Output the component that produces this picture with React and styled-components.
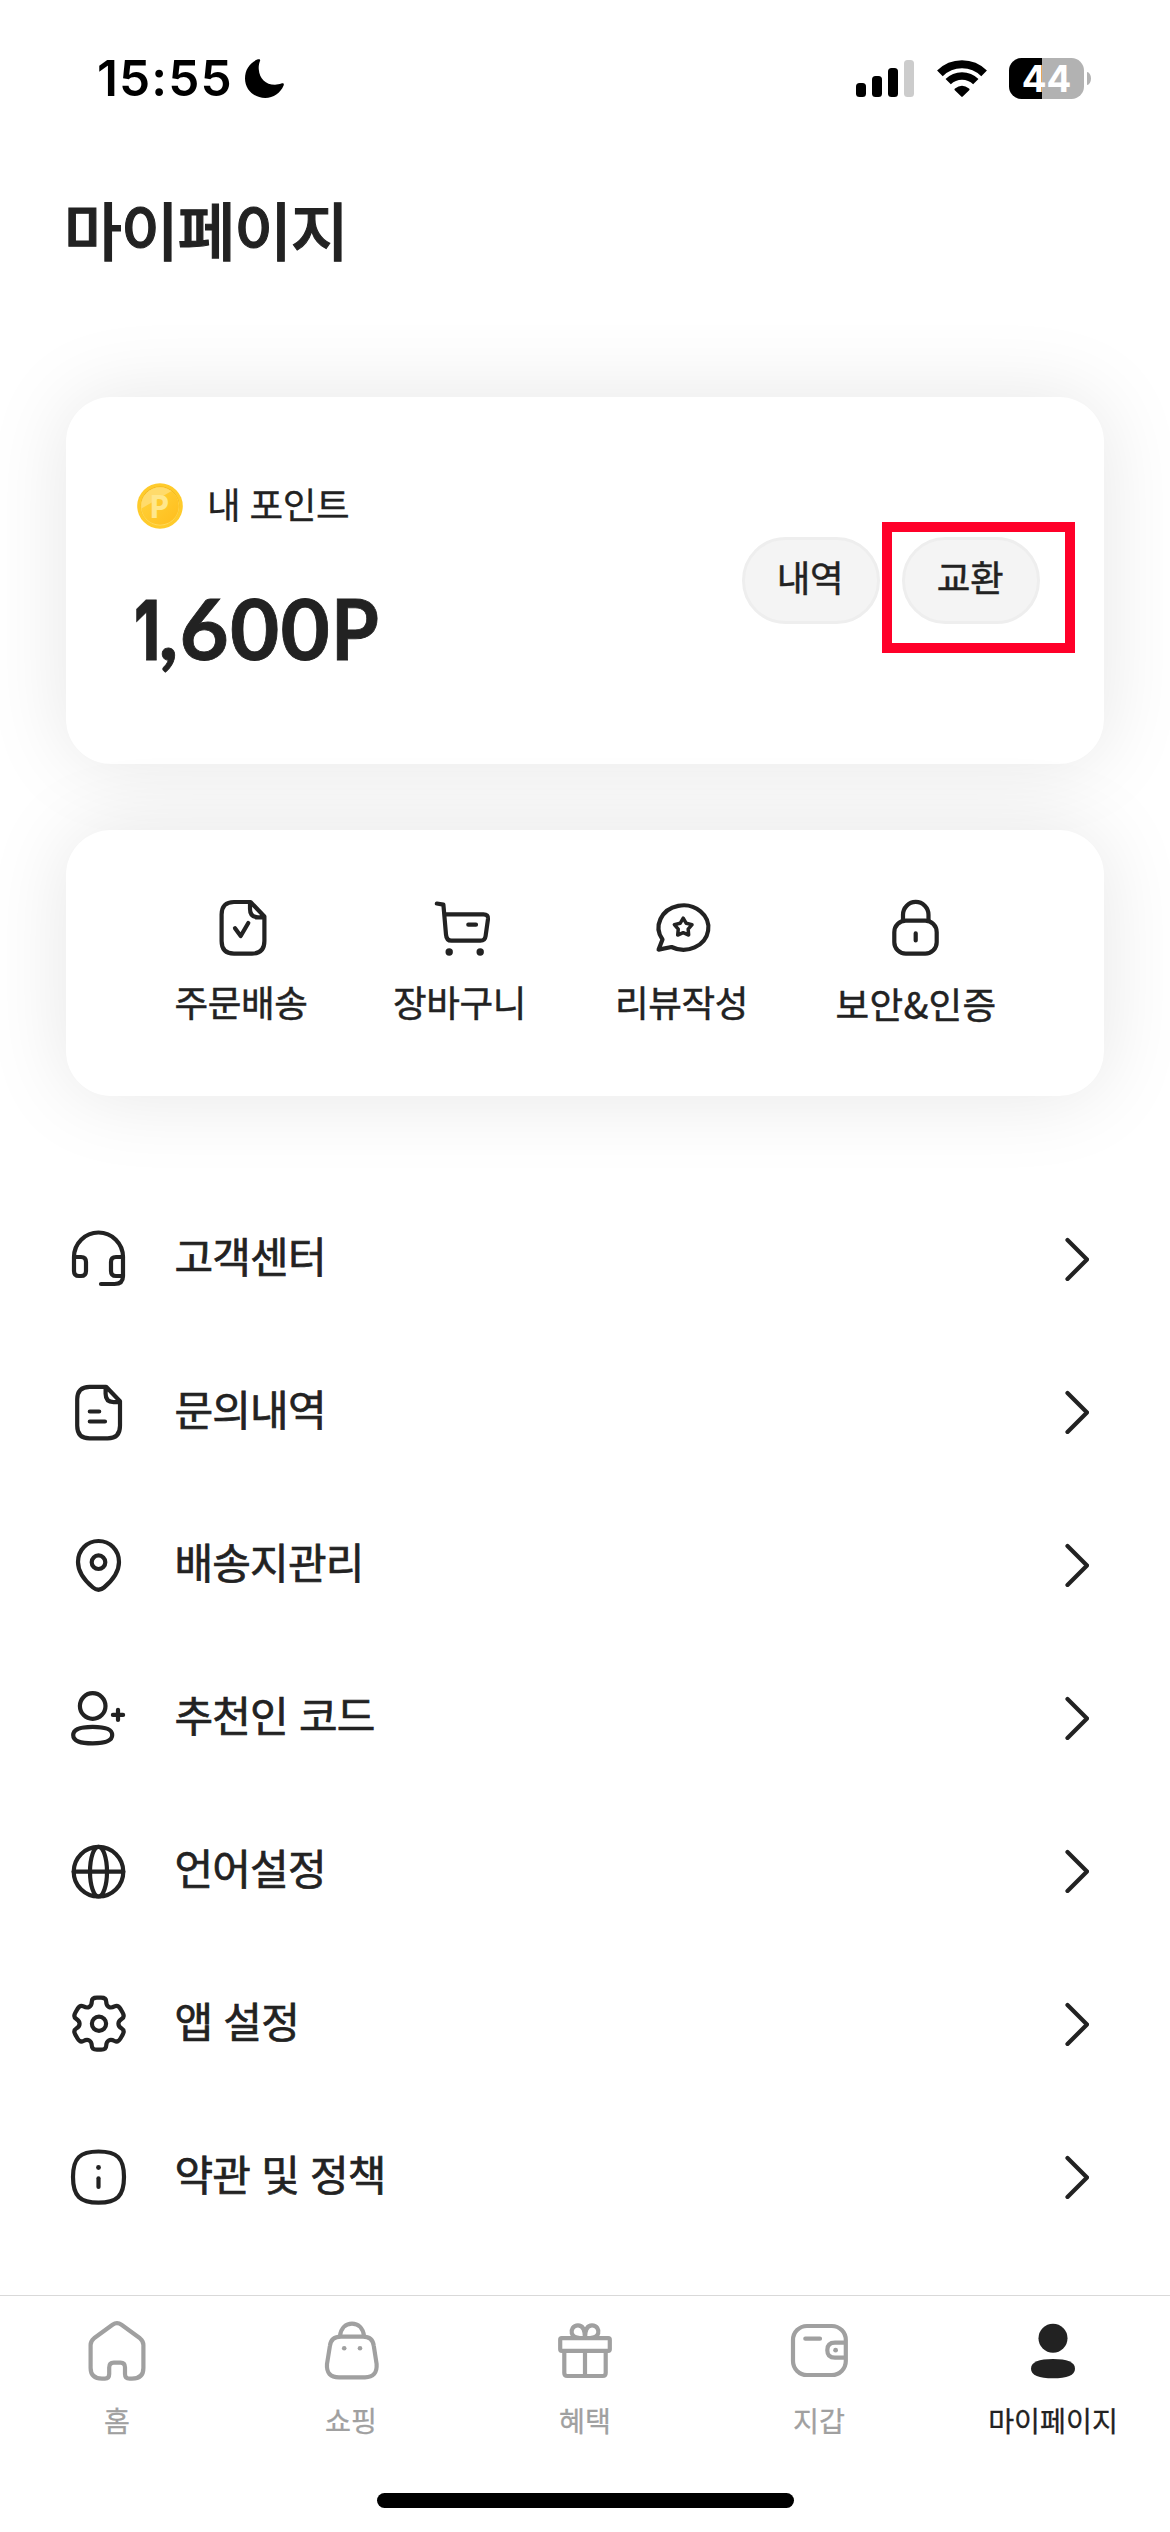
import React from 'react';
import styled, { createGlobalStyle } from 'styled-components';

const KR = '"Noto Sans CJK KR", "Noto Sans", sans-serif';
const INK = '#222222';
const MUTED = '#a0a0a0';

const GlobalStyle = createGlobalStyle`
  * { box-sizing: border-box; }
  body { margin: 0; background: #fff; overflow-x: hidden; }
`;

const Screen = styled.div`
  width: 1170px;
  height: 2532px;
  display: flex;
  flex-direction: column;
  overflow: hidden;
  background: #fff;
  color: ${INK};
  font-family: ${KR};
`;

/* status bar */
const StatusBar = styled.header`
  flex: none;
  height: 156px;
  padding: 0 79px 0 97px;
  display: flex;
  align-items: center;
  color: #000;
`;
const Time = styled.span`
  width: 136px;
  margin-right: 12px;
  font: 600 49.5px/60px Inter, sans-serif;
  letter-spacing: 1.1px;
  white-space: nowrap;
`;
const StatusIcons = styled.div`
  margin-left: auto;
  display: flex;
  align-items: center;
  gap: 22.5px;
`;
const Signal = styled.div`
  display: flex;
  align-items: flex-end;
  gap: 6px;
  height: 37px;
`;
const Bar = styled.i`
  width: 10px;
  height: ${(p) => p.$h}px;
  border-radius: 3.5px;
  background: ${(p) => (p.$off ? '#cccccc' : '#000')};
`;
const BatteryWrap = styled.div`
  display: flex;
  align-items: center;
  gap: 3px;
`;
const BatteryBody = styled.div`
  width: 75px;
  height: 41px;
  border-radius: 12.5px;
  background: linear-gradient(90deg, #000 33px, #b2b2b2 33px);
  color: #fff;
  text-align: center;
  font: 700 36.7px/42px Inter, sans-serif;
`;
const BatteryCap = styled.i`
  width: 4px;
  height: 13px;
  border-radius: 0 4px 4px 0 / 0 6.5px 6.5px 0;
  background: #b2b2b2;
`;

/* page content */
const Title = styled.h1`
  flex: none;
  margin: 32px 0 129px 64px;
  font-size: 63px;
  line-height: 80px;
  font-weight: 500;
  letter-spacing: -0.02em;
  -webkit-text-stroke: 1.1px currentColor;
`;
const Cards = styled.section`
  flex: none;
  margin: 0 66px;
  display: flex;
  flex-direction: column;
  gap: 66px;
`;
const Card = styled.div`
  background: #fff;
  border-radius: 45px;
  box-shadow: 0 0 84px rgba(0, 0, 0, 0.1);
`;
const PointCard = styled(Card)`
  height: 367px;
  padding: 0 64px 0 71px;
  display: flex;
  align-items: center;
  justify-content: space-between;
`;
const PointInfo = styled.div`
  align-self: flex-start;
  padding-top: 86px;
`;
const PointLabel = styled.div`
  height: 46px;
  display: flex;
  align-items: center;
  gap: 24px;
`;
const LabelText = styled.span`
  padding-bottom: 5px;
  font-size: 36.6px;
  line-height: 50px;
  letter-spacing: -0.4px;
  word-spacing: 1.5px;
  -webkit-text-stroke: 0.3px currentColor;
`;
const Amount = styled.div`
  margin-top: 53px;
  margin-left: -3px;
  display: flex;
  align-items: baseline;
  font: 700 85px/90px Lato, sans-serif;
  letter-spacing: 1.2px;
  -webkit-text-stroke: 0.8px currentColor;
`;
const LeadDigit = styled.span`
  width: 24.5px;
  font-family: Inter, sans-serif;
  font-weight: 800;
  font-size: 83px;
  letter-spacing: 0;
  white-space: nowrap;
  transform: scaleX(0.7);
  transform-origin: 0 50%;
`;
const Unit = styled.span`
  transform: scaleX(0.91);
  transform-origin: 0 50%;
`;
const Actions = styled.div`
  display: flex;
  gap: 22px;
`;
const Pill = styled.button`
  width: 138px;
  height: 87px;
  padding: 0 2px 8px 0;
  border: 3px solid #eeeeee;
  border-radius: 44px;
  background: #f4f4f4;
  color: ${INK};
  font: 400 36.6px/50px ${KR};
  letter-spacing: -0.4px;
  -webkit-text-stroke: 0.5px currentColor;
`;
const Highlighted = styled.div`
  position: relative;
  display: flex;
`;
const HighlightFrame = styled.div`
  position: absolute;
  left: -20px;
  top: -15px;
  width: 193px;
  height: 131px;
  border: 10px solid #ff0029;
`;

const QuickCard = styled(Card)`
  height: 266px;
  padding: 65px 0 0 67px;
  display: grid;
  grid-template-columns: 220px 217px 227px 238px;
`;
const QuickItem = styled.a`
  display: flex;
  flex-direction: column;
  align-items: center;
  gap: 16px;
`;
const QuickText = styled.span`
  padding-top: ${(p) => (p.$wide ? 2 : 0)}px;
  margin-right: ${(p) => (p.$wide ? 0 : 4)}px;
  font-size: 36.6px;
  line-height: 50px;
  letter-spacing: ${(p) => (p.$wide ? 0.3 : -0.4)}px;
  -webkit-text-stroke: 0.5px currentColor;
`;

const Menu = styled.nav`
  flex: none;
  margin-top: 86px;
`;
const MenuRow = styled.a`
  height: 153px;
  padding: 0 81px 0 66px;
  display: flex;
  align-items: center;
`;
const MenuText = styled.span`
  flex: 1;
  margin-left: 42.5px;
  padding-bottom: 8px;
  font-size: 42px;
  line-height: 60px;
  letter-spacing: -0.02em;
  word-spacing: 2.5px;
  -webkit-text-stroke: 0.7px currentColor;
`;

/* bottom navigation */
const TabBar = styled.footer`
  flex: none;
  height: 237px;
  margin-top: auto;
  border-top: 1px solid #d9d9d9;
  display: flex;
  flex-direction: column;
  align-items: center;
  justify-content: space-between;
`;
const Tabs = styled.div`
  width: 100%;
  padding-top: 19px;
  display: grid;
  grid-template-columns: repeat(5, 1fr);
`;
const Tab = styled.a`
  display: flex;
  flex-direction: column;
  align-items: center;
  gap: 12.5px;
  color: ${(p) => (p.$active ? INK : MUTED)};
`;
const TabText = styled.span`
  font-size: 28.2px;
  line-height: 40px;
  -webkit-text-stroke: 0.3px currentColor;
`;
const HomeIndicator = styled.div`
  width: 417px;
  height: 15px;
  margin-bottom: 24px;
  border-radius: 8px;
  background: #000;
`;

const Svg = styled.svg`
  flex: none;
  display: block;
  fill: none;
  stroke: currentColor;
  stroke-width: 4.2;
  stroke-linecap: round;
  stroke-linejoin: round;
`;
const Solid = styled.g`
  fill: currentColor;
  stroke: none;
`;
const CoinLetter = styled.text`
  font: 700 32.5px "Open Sans", sans-serif;
  fill: #ffe78c;
  stroke: none;
`;

const Icon = ({ size = 66, children }) => (
  <Svg width={size} height={size} viewBox={`0 0 ${size} ${size}`}>{children}</Svg>
);

const sheet = 'M40.5 7H24Q11.6 7 11.6 19.5V46Q11.6 58.6 24 58.6H42Q54.4 58.6 54.4 46V21.5L40.5 7ZM40 7V14Q40 22.3 48 22.3H54.4';

const gearPath = (() => {
  const pts = [];
  for (let k = 0; k < 6; k++) {
    const a = (k * Math.PI) / 3;
    [[-7.3, -18.2], [-7.1, -26], [7.1, -26], [7.3, -18.2]].forEach(([x, y]) => {
      pts.push([33 + x * Math.cos(a) - y * Math.sin(a), 32.7 + x * Math.sin(a) + y * Math.cos(a)]);
    });
  }
  const n = pts.length;
  const toward = (p, q) => {
    const len = Math.hypot(q[0] - p[0], q[1] - p[1]);
    const t = Math.min(5, len / 2) / len;
    return [p[0] + (q[0] - p[0]) * t, p[1] + (q[1] - p[1]) * t];
  };
  return pts
    .map((p, i) => {
      const s = toward(p, pts[(i + n - 1) % n]);
      const e = toward(p, pts[(i + 1) % n]);
      return `${i ? 'L' : 'M'}${s} Q${p} ${e}`;
    })
    .join(' ') + 'Z';
})();

const quick = [
  { label: '주문배송', icon: <><path d={sheet} /><path d="M25 33.3L30.7 41L38.3 28" /></> },
  {
    label: '장바구니',
    icon: (
      <>
        <path d="M7.8 8.5L14.4 9.6L17 39.5Q17.4 45.7 22.5 45.7H51.5Q56 45.7 56.6 41L59 24Q59.5 19.3 54.5 19.3H15.2M39.3 29.7H47" />
        <Solid><circle cx="20.2" cy="57" r="3.7" /><circle cx="51.2" cy="57" r="3.7" /></Solid>
      </>
    ),
  },
  {
    label: '리뷰작성',
    icon: (
      <>
        <path d="M20.5 52A24.9 22.2 0 1 0 11.5 44.5L7.6 54.6Z" />
        <path d="M32.2 23.2l3.06 5.1 5.78 1.33-3.89 4.47.52 5.92-5.47-2.32-5.47 2.32.52-5.92-3.89-4.47 5.78-1.33z" strokeWidth="3.5" />
      </>
    ),
  },
  {
    label: '보안&인증',
    wide: true,
    icon: (
      <>
        <rect x="11.3" y="25.7" width="42.4" height="33" rx="11.5" />
        <path d="M20 25.7V19.7A12.75 12.75 0 0 1 45.5 19.7V25.7M32.7 38.3V45.5" />
      </>
    ),
  },
];

const menu = [
  {
    label: '고객센터',
    icon: (
      <>
        <path d="M8 31H15Q20 31 20 36V45Q20 50 15 50H13Q8 50 8 45V31A24.5 24.5 0 0 1 57 31V50Q57 58 48.5 58H35" />
        <path d="M57 31H50Q45 31 45 36V45Q45 50 50 50H57" />
      </>
    ),
  },
  { label: '문의내역', icon: <><path d={sheet} transform="translate(-.4 .8)" /><path d="M23.8 32.5H33.2M23.8 42.5H39" /></> },
  {
    label: '배송지관리',
    icon: (
      <>
        <path d="M32.5 9C21 9 12 18 12 30C12 41 21 50.5 27 55.5Q32.5 60 38 55.5C44 50.5 53 41 53 30C53 18 44 9 32.5 9Z" />
        <circle cx="32.5" cy="30.2" r="6.8" />
      </>
    ),
  },
  {
    label: '추천인 코드',
    icon: (
      <>
        <circle cx="26.7" cy="21" r="12.8" />
        <path d="M26.7 41.8C39 41.8 46.2 44 46.2 50.1S39 58.4 26.7 58.4 7.2 56.2 7.2 50.1 14.4 41.8 26.7 41.8Z" />
        <path d="M52 24.8V35M46.9 29.9H57.1" />
      </>
    ),
  },
  {
    label: '언어설정',
    icon: (
      <>
        <circle cx="32.5" cy="33.7" r="24.8" />
        <ellipse cx="32.5" cy="33.7" rx="8.5" ry="24.8" />
        <path d="M7.7 33.7H57.3" />
      </>
    ),
  },
  { label: '앱 설정', icon: <><path d={gearPath} /><circle cx="33" cy="32.7" r="7.1" /></> },
  {
    label: '약관 및 정책',
    icon: (
      <>
        <path d="M32.5 7.5C51 7.5 58 14 58 33S51 58.7 32.5 58.7 7 52 7 33 14 7.5 32.5 7.5Z" />
        <path d="M32.5 34.3V43" />
        <Solid><circle cx="32.5" cy="23.5" r="2.4" /></Solid>
      </>
    ),
  },
];

const tabs = [
  {
    label: '홈',
    icon: <path d="M9.6 30Q9.6 26 13 23.3L31.5 9.8Q36 6.6 40.5 9.8L59 23.3Q62.4 26 62.4 30V53Q62.4 63.7 51 63.7H48.5Q44 63.7 44 59V52.5Q44 47.7 39.5 47.7H32.8Q28.2 47.7 28.2 52.5V59Q28.2 63.7 24 63.7H21Q9.6 63.7 9.6 53Z" />,
  },
  {
    label: '쇼핑',
    icon: (
      <>
        <path d="M26 21.7H48Q57.6 21.7 58.8 31L61.6 49Q62.5 62.3 50 62.3H24Q11 62.3 12 49L14.9 31Q16 21.7 26 21.7Z" />
        <path d="M25 21C26 13 31 8.7 37 8.7S48 13 49 21" />
        <Solid><circle cx="29.2" cy="33.3" r="2.3" /><circle cx="45" cy="33.3" r="2.3" /></Solid>
      </>
    ),
  },
  {
    label: '혜택',
    icon: (
      <>
        <rect x="11.2" y="23.2" width="49.6" height="12.6" rx="1.5" />
        <path d="M15.3 36V58Q15.3 61 18.3 61H53.7Q56.7 61 56.7 58V36M36 36V61" />
        <path d="M36 23C36 13.5 33 10.3 29 10.3C24 10.3 22 14.8 22.8 18.3C23.6 21.5 27 23 31 23M36 23C36 13.5 39 10.3 43 10.3C48 10.3 50 14.8 49.2 18.3C48.4 21.5 45 23 41 23" />
      </>
    ),
  },
  {
    label: '지갑',
    icon: (
      <>
        <rect x="10" y="11" width="52.8" height="49" rx="14" />
        <path d="M22.3 23.7H37M62 27.7H52Q44.3 27.7 44.3 35.2T52 42.7H62" />
        <Solid><circle cx="52.6" cy="35.2" r="2.4" /></Solid>
      </>
    ),
  },
  {
    label: '마이페이지',
    active: true,
    icon: (
      <Solid>
        <circle cx="36" cy="23.2" r="14.5" />
        <path d="M36 44C50 44 58 47 58 53.7S50 63.3 36 63.3 14 60.4 14 53.7 22 44 36 44Z" />
      </Solid>
    ),
  },
];

const Moon = () => (
  <Svg width="39" height="39" viewBox="0 0 39 39">
    <Solid>
      <path d="M12.2.6C14.5-.4 15.8.3 14.9 2.2C13.6 5.5 13.6 9 13.8 10.5C14.5 19.5 20.5 25.8 30 25.8C32 25.8 34.5 25.3 36.3 24.6C38.4 23.8 39.3 24.8 38.6 26.6C35.5 34 28.5 39 20.2 39C8.8 39 0 30.5 0 19.6C0 10.8 4.6 3.8 12.2.6Z" />
    </Solid>
  </Svg>
);

const WifiSvg = styled(Svg)`
  stroke-linecap: butt;
`;
const WifiBand = styled.path`
  stroke-width: ${(p) => p.$w};
`;
const Wifi = () => (
  <WifiSvg width="50" height="37" viewBox="0 0 50 37">
    <WifiBand d="M2.9 13.4A31.3 31.3 0 0 1 47.1 13.4" $w={8} />
    <WifiBand d="M11.2 21.7A19.5 19.5 0 0 1 38.8 21.7" $w={7.5} />
    <Solid><path d="M17.8 30.2Q17 29.3 18 28.6Q25 22.8 32 28.6Q33 29.3 32.2 30.2L25.7 36.6Q25 37.2 24.3 36.6Z" /></Solid>
  </WifiSvg>
);

const Coin = () => (
  <Svg width="46" height="46" viewBox="0 0 46 46">
    <defs>
      <linearGradient id="coin" x1="0" y1="0" x2="1" y2="1">
        <stop offset="0" stopColor="#ffd43c" />
        <stop offset="1" stopColor="#ffbd1c" />
      </linearGradient>
      <clipPath id="coinFace"><circle cx="23" cy="23" r="18.8" /></clipPath>
    </defs>
    <Solid>
      <circle cx="23" cy="23" r="22.8" fill="#ffcb2b" />
      <circle cx="23" cy="23" r="19.4" fill="#efb01c" />
      <circle cx="23" cy="23.5" r="19.2" fill="#ffda5a" />
      <circle cx="23" cy="23" r="18.8" fill="url(#coin)" />
      <path d="M0 28L38 6V0H0Z" fill="#ffdb6b" clipPath="url(#coinFace)" />
    </Solid>
    <CoinLetter x="12" y="35">P</CoinLetter>
  </Svg>
);

export default function App() {
  return (
    <Screen>
      <GlobalStyle />
      <StatusBar>
        <Time>15:55</Time>
        <Moon />
        <StatusIcons>
          <Signal>
            <Bar $h={14} />
            <Bar $h={21} />
            <Bar $h={29} />
            <Bar $h={37} $off />
          </Signal>
          <Wifi />
          <BatteryWrap>
            <BatteryBody>44</BatteryBody>
            <BatteryCap />
          </BatteryWrap>
        </StatusIcons>
      </StatusBar>

      <Title>마이페이지</Title>

      <Cards>
        <PointCard>
          <PointInfo>
            <PointLabel>
              <Coin />
              <LabelText>내 포인트</LabelText>
            </PointLabel>
            <Amount>
              <LeadDigit>1</LeadDigit>
              ,600
              <Unit>P</Unit>
            </Amount>
          </PointInfo>
          <Actions>
            <Pill>내역</Pill>
            <Highlighted>
              <Pill>교환</Pill>
              <HighlightFrame />
            </Highlighted>
          </Actions>
        </PointCard>
        <QuickCard>
          {quick.map((q) => (
            <QuickItem key={q.label}>
              <Icon>{q.icon}</Icon>
              <QuickText $wide={q.wide}>{q.label}</QuickText>
            </QuickItem>
          ))}
        </QuickCard>
      </Cards>

      <Menu>
        {menu.map((m) => (
          <MenuRow key={m.label}>
            <Icon>{m.icon}</Icon>
            <MenuText>{m.label}</MenuText>
            <Svg width="24" height="44" viewBox="0 0 24 44"><path d="M2.5 3L22 22.5L2.5 42" /></Svg>
          </MenuRow>
        ))}
      </Menu>

      <TabBar>
        <Tabs>
          {tabs.map((t) => (
            <Tab key={t.label} $active={t.active}>
              <Icon size={72}>{t.icon}</Icon>
              <TabText>{t.label}</TabText>
            </Tab>
          ))}
        </Tabs>
        <HomeIndicator />
      </TabBar>
    </Screen>
  );
}
